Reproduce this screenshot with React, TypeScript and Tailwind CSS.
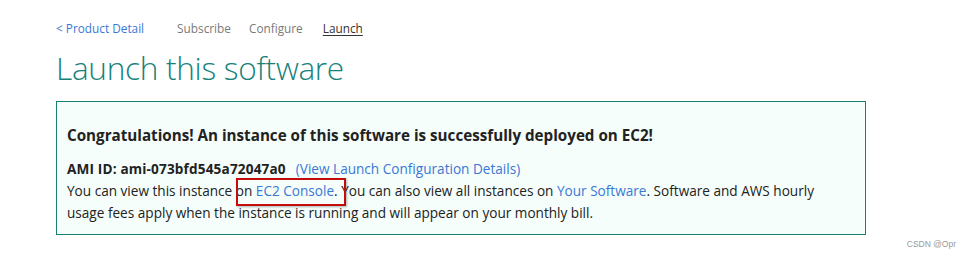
import React from "react";

export default function App() {
  return (
    <div className="relative w-[971px] h-[258px] bg-white" style={{ fontFamily: '"Open Sans", "Noto Sans", sans-serif' }}>
      <div className="pl-[56px] pt-[18px]">
        <nav className="flex items-center text-[11.8px] leading-[20px]">
          <a className="text-[#3a78d6]">&lt; Product Detail</a>
          <span className="ml-[33px] text-[#7a7a7a]">Subscribe</span>
          <span className="ml-[18px] text-[#7a7a7a]">Configure</span>
          <span className="ml-[20px] text-[#333] underline underline-offset-2">Launch</span>
        </nav>
        <h1 className="mt-[8px] text-[31.6px] leading-[44px] font-light text-[#17827a] tracking-[-0.3px]">Launch this software</h1>
        <div className="mt-[11px] w-[810px] h-[134px] border border-[#17806f] bg-[#f5fefa] px-[10px] pt-[22px]">
          <p className="text-[15.2px] leading-[22px] font-bold text-[#222]">
            Congratulations! An instance of this software is successfully deployed on EC2!
          </p>
          <div className="mt-[12px] text-[13.6px] leading-[22px] text-[#222]">
            <div>
              <span className="font-bold tracking-[0.15px]">AMI ID: ami-073bfd545a72047a0</span>
              <a className="ml-[10px] text-[#3a78d6]">(View Launch Configuration Details)</a>
            </div>
            <div>
              You can view this instance <span className="relative">on <a className="text-[#3a78d6]">EC2 Console</a>.
                <span className="absolute left-[0px] top-[-3px] w-[110px] h-[28px] border-2 border-[#c40c0c] shadow-[1px_1px_2px_rgba(0,0,0,0.3)]"></span>
              </span> You can also view all instances on <a className="text-[#3a78d6]">Your Software</a>. Software and AWS hourly
            </div>
            <div>usage fees apply when the instance is running and will appear on your monthly bill.</div>
          </div>
        </div>
      </div>
      <div className="absolute right-[15px] top-[238px] text-[8.5px] text-[#999]" style={{ fontFamily: '"Liberation Sans", sans-serif' }}>CSDN @Opr</div>
    </div>
  );
}
